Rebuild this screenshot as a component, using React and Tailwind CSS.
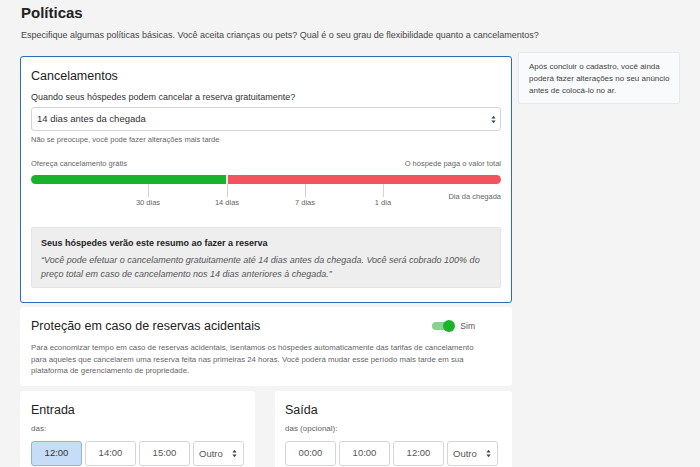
import React from 'react';

const ticks = [
  { left: 'left-[117px]', label: '30 dias' },
  { left: 'left-[196px]', label: '14 dias' },
  { left: 'left-[274px]', label: '7 dias' },
  { left: 'left-[352px]', label: '1 dia' },
];

function Chevrons() {
  return (
    <svg width="5" height="9" viewBox="0 0 5 9" className="text-gray-700">
      <path d="M2.5 0.8 L4.6 3.6 H0.4 Z" fill="currentColor" />
      <path d="M2.5 8.2 L4.6 5.4 H0.4 Z" fill="currentColor" />
    </svg>
  );
}

function TimeButton({ label, active }) {
  return (
    <div
      className={`w-[51px] h-[25px] flex items-center justify-center rounded-[3px] border text-[9.5px] ${
        active ? 'bg-[#c7dcf7] border-[#8fb4e3] text-[#333]' : 'bg-white border-[#d6d6d6] text-[#555]'
      }`}
    >
      {label}
    </div>
  );
}

function OtherSelect() {
  return (
    <div className="w-[51px] h-[25px] flex items-center justify-between pl-[5px] pr-[6px] rounded-[3px] border border-[#d6d6d6] bg-white text-[9.5px] text-[#555]">
      <span className="mt-[2px]">Outro</span>
      <Chevrons />
    </div>
  );
}

export default function App() {
  return (
    <div className="w-[700px] h-[467px] overflow-hidden bg-[#f4f4f5] text-[#333] font-['Liberation_Sans',Arial,sans-serif]">
      <div className="pl-[21px] pt-[3px]">
        <h1 className="text-[15px] font-bold text-[#222] leading-[20px]">Políticas</h1>
        <p className="mt-[5px] text-[9px] text-[#444] leading-[14px]">
          Especifique algumas políticas básicas. Você aceita crianças ou pets? Qual é o seu grau de flexibilidade quanto a cancelamentos?
        </p>
      </div>

      <div className="flex gap-[6px] pl-[20px] mt-[10px]">
        <div className="w-[492px] flex flex-col">
          <div className="bg-white border-[1.5px] border-[#2f6db3] rounded-[3px] px-[10px] pt-[10px] pb-[14px] mt-[4px]">
            <h2 className="text-[12.5px] text-[#222] leading-[18px]">Cancelamentos</h2>
            <p className="mt-[6px] text-[9px] text-[#333] leading-[12px]">Quando seus hóspedes podem cancelar a reserva gratuitamente?</p>
            <div className="mt-[4px] h-[24px] border border-[#d6d6d6] rounded-[3px] flex items-center justify-between pl-[5px] pr-[4px] text-[9.5px] text-[#333]">
              <span>14 dias antes da chegada</span>
              <Chevrons />
            </div>
            <p className="mt-[4px] text-[7.5px] text-[#666] leading-[10px]">Não se preocupe, você pode fazer alterações mais tarde</p>

            <div className="mt-[14px] flex justify-between text-[7.5px] text-[#666] leading-[10px]">
              <span>Ofereça cancelamento grátis</span>
              <span>O hóspede paga o valor total</span>
            </div>
            <div className="relative mt-[6px] h-[52px]">
              <div className="flex h-[9px] rounded-full overflow-hidden">
                <div className="w-[195px] bg-[#19b32b]"></div>
                <div className="w-[2px] bg-[#e8e8e8]"></div>
                <div className="flex-1 bg-[#f2545e]"></div>
              </div>
              {ticks.map(t => (
                <div key={t.label} className={`absolute top-[9px] ${t.left} flex flex-col items-center -translate-x-1/2`}>
                  <div className="w-px h-[13px] bg-[#d0d0d0]"></div>
                  <span className="mt-[1px] text-[7.5px] leading-[10px] text-[#666] whitespace-nowrap">{t.label}</span>
                </div>
              ))}
              <span className="absolute right-0 top-[17px] text-[7.5px] leading-[10px] text-[#666]">Dia da chegada</span>
            </div>

            <div className="bg-[#eeeeee] border border-[#e4e4e4] rounded-[2px] px-[9px] pt-[9px] pb-[6px]">
              <p className="text-[9px] font-bold text-[#222] leading-[12px]">Seus hóspedes verão este resumo ao fazer a reserva</p>
              <p className="mt-[4px] text-[9px] italic text-[#555] leading-[14px]">
                “Você pode efetuar o cancelamento gratuitamente até 14 dias antes da chegada. Você será cobrado 100% do preço total em caso de cancelamento nos 14 dias anteriores à chegada.”
              </p>
            </div>
          </div>

          <div className="mt-[4px] bg-white rounded-[3px] pl-[11px] pr-[11px] pt-[10px] pb-[9px]">
            <div className="flex items-center justify-between">
              <h2 className="text-[12.5px] text-[#222] leading-[18px]">Proteção em caso de reservas acidentais</h2>
              <div className="flex items-center mr-[26px]">
                <div className="relative w-[22px] h-[8px] rounded-full bg-[#84d38e]">
                  <div className="absolute -right-[1px] -top-[2px] w-[12px] h-[12px] rounded-full bg-[#18b42b]"></div>
                </div>
                <span className="ml-[6px] text-[8.5px] text-[#555]">Sim</span>
              </div>
            </div>
            <p className="mt-[7px] w-[460px] text-[7.8px] text-[#666] leading-[11.5px]">
              Para economizar tempo em caso de reservas acidentais, isentamos os hóspedes automaticamente das tarifas de cancelamento para aqueles que cancelarem uma reserva feita nas primeiras 24 horas. Você poderá mudar esse período mais tarde em sua plataforma de gerenciamento de propriedade.
            </p>
          </div>

          <div className="flex gap-[20px] mt-[5px]">
            <div className="w-[235px] bg-white rounded-[3px] pl-[11px] pt-[10px] pb-[10px]">
              <h2 className="text-[12.5px] text-[#222] leading-[18px]">Entrada</h2>
              <p className="mt-[5px] text-[8px] leading-[10px] text-[#666]">das:</p>
              <div className="mt-[7px] flex gap-[3px]">
                <TimeButton label="12:00" active />
                <TimeButton label="14:00" />
                <TimeButton label="15:00" />
                <OtherSelect />
              </div>
            </div>
            <div className="w-[237px] bg-white rounded-[3px] pl-[10px] pt-[10px] pb-[10px]">
              <h2 className="text-[12.5px] text-[#222] leading-[18px]">Saída</h2>
              <p className="mt-[5px] text-[8px] leading-[10px] text-[#666]">das (opcional):</p>
              <div className="mt-[7px] flex gap-[3px]">
                <TimeButton label="00:00" />
                <TimeButton label="10:00" />
                <TimeButton label="12:00" />
                <OtherSelect />
              </div>
            </div>
          </div>
        </div>

        <div className="w-[162px] h-[52px] bg-[#f9fafc] border border-[#e6e8ec] rounded-[2px] pl-[10px] pr-[6px] pt-[8px] text-[8px] leading-[12px] text-[#444]">
          Após concluir o cadastro, você ainda poderá fazer alterações no seu anúncio antes de colocá-lo no ar.
        </div>
      </div>
    </div>
  );
}
